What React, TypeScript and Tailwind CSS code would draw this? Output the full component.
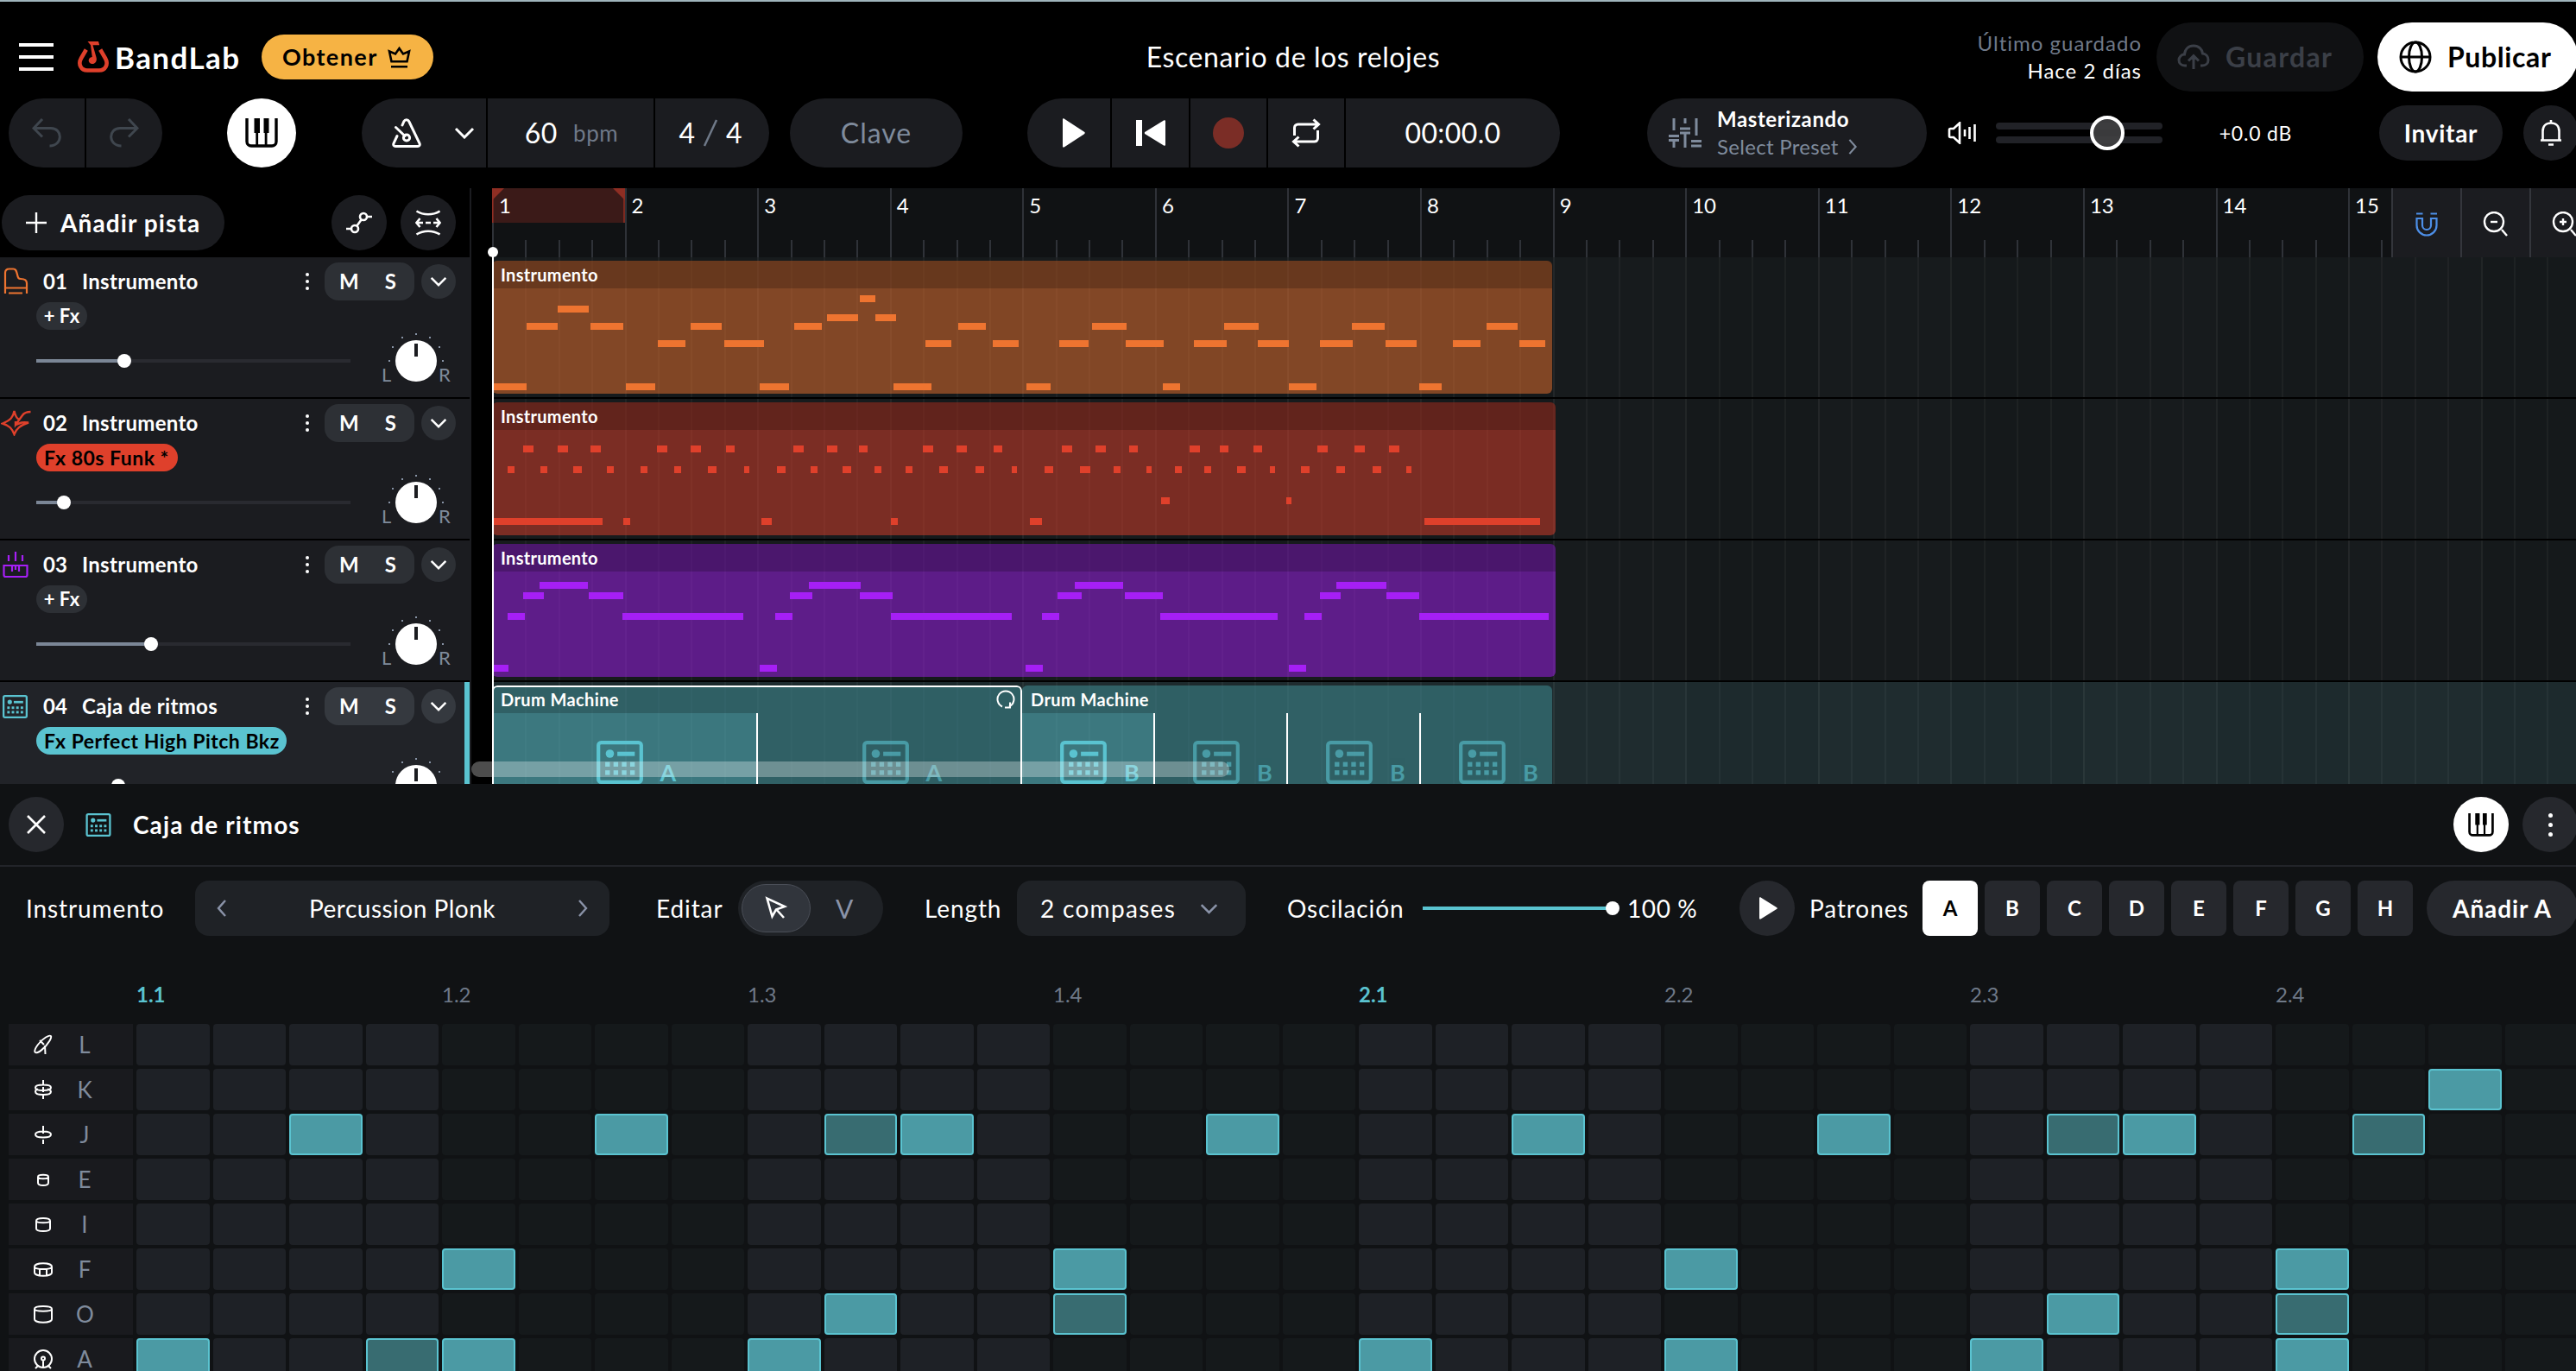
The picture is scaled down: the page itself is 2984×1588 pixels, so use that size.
import type { ReactNode } from 'react'

type Span = [number, number]

interface NoteRow {
  y: number
  spans: Span[]
}

interface Track {
  id: string
  name: string
  fx: string | null
  fxClass: string
  volume: number
  icon: ReactNode
  selected?: boolean
}

/* ---------- Icons ---------- */

const DrumMachineIcon = ({ className }: { className: string }) => (
  <svg viewBox="0 0 28 26" className={className} fill="currentColor">
    <rect x="1.1" y="1.1" width="25.8" height="23.8" rx="1.6" fill="none" stroke="currentColor" strokeWidth="2.2" />
    <circle cx="8" cy="7.800" r="2.5" />
    <rect x="12.5" y="6.600" width="10.5" height="2.6" />
    {[12.8, 17.8].map((y) =>
      [5.2, 10.2, 15.2, 20.2].map((x) => <rect key={`${x}-${y}`} x={x} y={y} width="2.8" height="2.8" />)
    )}
  </svg>
)

const PianoKeysIcon = ({ className }: { className: string }) => (
  <svg viewBox="0 0 38 34" className={className}>
    <path d="M2 0v27a5 5 0 0 0 5 5h24a5 5 0 0 0 5-5V0" fill="none" stroke="currentColor" strokeWidth="3.4" />
    <path d="M10.5 0h6.500v17h-6.500zM21.500 0h6v17h-6zM12.300 16h2.800v15h-2.800zM22.700 16h2.800v15h-2.800z" fill="currentColor" />
  </svg>
)

const ChevronDown = ({ className }: { className: string }) => (
  <svg viewBox="0 0 24 14" className={className} fill="none" stroke="currentColor" strokeWidth="3">
    <path d="M2 2l10 10L22 2" />
  </svg>
)

const ChevronRight = ({ className }: { className: string }) => (
  <svg viewBox="0 0 12 20" className={className} fill="none" stroke="currentColor" strokeWidth="2.400">
    <path d="M2 1l8 9-8 9" />
  </svg>
)

const Dots = ({ className }: { className: string }) => (
  <div className={`flex flex-col items-center ${className}`}>
    <span className="h-1 w-1 rounded-full bg-white" />
    <span className="h-1 w-1 rounded-full bg-white" />
    <span className="h-1 w-1 rounded-full bg-white" />
  </div>
)

const PianoIcon = () => (
  <svg viewBox="0 0 30 32" className="h-8 w-[30px] text-[#ee7430]" fill="none" stroke="currentColor" strokeWidth="2.2">
    <path d="M3 30V6c0-3 2-4.500 4.500-4.500h5C15.500 1.500 16 4 17 8c.8 4 1.500 5 4 5 5 0 7 1.500 7 5v12M3 23.500h25M7 29.500h16" />
  </svg>
)

const SparkIcon = () => (
  <svg viewBox="0 0 35 30" className="-ml-0.5 h-[30px] w-[35px] text-[#df402b]" fill="none" stroke="currentColor" strokeWidth="2.4">
    <path d="M34.500 2c-5 0-7.500 1-9.500 4l-8 11v-4M20.500 10.500C17.500 9 16.500 5.500 15.500 1 14.500 8 11 12 2 15.500c8 2.500 11 6 13.500 12.500C18 21.500 22 18 32 14.500c-4-.6-6-.6-8 0l-7 2.500" />
  </svg>
)

const SynthIcon = () => (
  <svg viewBox="0 0 30 32" className="h-8 w-[30px] text-[#a61ff5]" fill="none" stroke="currentColor" strokeWidth="2.2">
    <path d="M1.500 17v11a2 2 0 0 0 2 2h23a2 2 0 0 0 2-2V17zM7 5v7M15 1v11M23 5v7M11 17v7M15 17v5M19 17v7M7 17h16" />
  </svg>
)

/* ---------- Data ---------- */

const bars = Array.from({ length: 16 }, (_, i) => i + 1)

const tracks: Track[] = [
  { id: '01', name: 'Instrumento', fx: null, fxClass: '', volume: 102, icon: <PianoIcon /> },
  { id: '02', name: 'Instrumento', fx: '80s Funk *', fxClass: 'w-[164px] bg-[#df402b]', volume: 32, icon: <SparkIcon /> },
  { id: '03', name: 'Instrumento', fx: null, fxClass: '', volume: 133, icon: <SynthIcon /> },
  {
    id: '04',
    name: 'Caja de ritmos',
    fx: 'Perfect High Pitch Bkz',
    fxClass: 'w-[290px] bg-[#5ac3d0]',
    volume: 95,
    icon: <DrumMachineIcon className="h-[27px] w-[29px] text-[#5ac3d0]" />,
    selected: true,
  },
]

const pianoNotes: NoteRow[] = [
  { y: 40, spans: [[426, 444]] },
  { y: 52, spans: [[76, 112]] },
  { y: 62, spans: [[388, 424], [444, 468]] },
  { y: 72, spans: [[40, 76], [114, 152], [230, 266], [350, 382], [540, 572], [695, 735], [848, 888], [996, 1034], [1152, 1188]] },
  { y: 92, spans: [[192, 224], [269, 315], [502, 532], [580, 610], [657, 691], [734, 778], [813, 851], [887, 923], [959, 997], [1035, 1071], [1113, 1145], [1190, 1220]] },
  { y: 142, spans: [[2, 40], [155, 189], [310, 344], [465, 509], [619, 647], [777, 797], [923, 955], [1074, 1100]] },
]

const funkNotes: NoteRow[] = [
  { y: 50, spans: [[36, 48], [76, 88], [114, 126], [191, 203], [230, 242], [271, 281], [349, 361], [388, 400], [425, 435], [499, 511], [538, 550], [581, 591], [660, 672], [699, 711], [738, 748], [808, 820], [843, 853], [882, 892], [956, 968], [999, 1011], [1039, 1051]] },
  { y: 74, spans: [[18, 26], [56, 64], [94, 104], [133, 141], [172, 180], [211, 219], [250, 260], [292, 298], [330, 340], [369, 377], [406, 416], [443, 451], [479, 487], [518, 528], [560, 570], [602, 608], [640, 650], [681, 693], [720, 728], [758, 764], [791, 799], [825, 833], [863, 873], [901, 907], [937, 947], [978, 988], [1020, 1030], [1059, 1065]] },
  { y: 110, spans: [[775, 785], [920, 926]] },
  { y: 134, spans: [[2, 128], [152, 160], [312, 324], [462, 470], [623, 637], [1080, 1214]] },
]

const synthNotes: NoteRow[] = [
  { y: 44, spans: [[55, 111], [367, 427], [675, 731], [978, 1036]] },
  { y: 56, spans: [[36, 60], [112, 152], [345, 371], [426, 464], [655, 683], [733, 777], [959, 983], [1036, 1074]] },
  { y: 80, spans: [[18, 38], [151, 291], [328, 348], [462, 602], [637, 657], [774, 910], [941, 961], [1074, 1224]] },
  { y: 140, spans: [[2, 19], [310, 330], [618, 638], [923, 943]] },
]

const drumRows: { note: string; on: number[]; soft: number[]; icon: ReactNode }[] = [
  {
    note: 'L',
    on: [],
    soft: [],
    icon: <path d="M2.500 20.500C1 17 9 7 15 3.500c6-3.500 8-2 4.500 4C15 15 5 24 2.500 20.500zM8 7l5 5M14 13l.5 10" />,
  },
  {
    note: 'K',
    on: [30],
    soft: [],
    icon: <path d="M12 1v5M12 18v5M12 6.500c6 0 9 1.500 9 3.200s-3 3.300-9 3.300-9-1.500-9-3.300 3-3.200 9-3.200zM3 14.500c0 2 3 3.500 9 3.500s9-1.500 9-3.500-2-2.500-4-3M3 14.500c0-1.500 1-2.500 3-3M12 9v6" />,
  },
  {
    note: 'J',
    on: [2, 6, 10, 14, 18, 22, 26],
    soft: [9, 25, 29],
    icon: <path d="M12 2v9M12 18v5M12 8.500c6 0 9 1.500 9 3.500s-3 3.500-9 3.500-9-1.500-9-3.500 3-3.500 9-3.500z" />,
  },
  {
    note: 'E',
    on: [],
    soft: [],
    icon: <path d="M6 9c0-3 12-3 12 0v7c0 4-12 4-12 0zM6 9c0 3 12 3 12 0" />,
  },
  {
    note: 'I',
    on: [],
    soft: [],
    icon: <path d="M4 8c0-4 16-4 16 0v9c0 4-16 4-16 0zM4 8c0 3 16 3 16 0" />,
  },
  {
    note: 'F',
    on: [4, 12, 20, 28],
    soft: [],
    icon: <path d="M2 9c0-5 20-5 20 0v7c0 5-20 5-20 0zM2 9c0 4 20 4 20 0M8 12.500v7M16 12.500v7" />,
  },
  {
    note: 'O',
    on: [9, 25],
    soft: [12, 28],
    icon: <path d="M2 6c0-4 20-4 20 0v12c0 5-20 5-20 0zM2 6c0 3.500 20 3.500 20 0" />,
  },
  {
    note: 'A',
    on: [0, 4, 8, 16, 20, 24, 28],
    soft: [3],
    icon: (
      <>
        <circle cx="12" cy="12" r="10" />
        <path d="M12 9.500a2 2 0 1 1 0 4 2 2 0 0 1 0-4zM12 13v9M3 23l3-3M21 23l-3-3" />
      </>
    ),
  },
]

const beats = ['1.1', '1.2', '1.3', '1.4', '2.1', '2.2', '2.3', '2.4']
const patterns = ['A', 'B', 'C', 'D', 'E', 'F', 'G', 'H']

/* ---------- Header ---------- */

function TopBar() {
  return (
    <div className="flex h-20 items-center *:shrink-0">
      <div className="ml-[22px] flex h-8 w-10 flex-col justify-between">
        <span className="h-1 bg-white" />
        <span className="h-1 bg-white" />
        <span className="h-1 bg-white" />
      </div>
      <svg viewBox="0 0 36 36" className="ml-7 h-9 w-9">
        <path d="M9.800 9.500L4 19.500c-4 7 0 14 7 14h14c7 0 11-7 7-14L26.200 9.500" fill="none" stroke="#df402b" strokeWidth="4.600" />
        <path d="M11.500 0H24l1.200 4.200h-7.700l4 14c1.400 4.800-1.500 7.800-4.500 7.800-5.300 0-6-7.500-.2-8L15 4.200z" fill="#df402b" />
      </svg>
      <div className="ml-[7px] w-[146px] text-[35px] font-bold leading-none tracking-[1.4px]">BandLab</div>
      <button className="ml-6 flex h-[52px] w-[199px] items-center rounded-full bg-[#f6b344] pl-6 text-black">
        <span className="w-[122px] text-left text-[27px] font-bold tracking-[1.4px]">Obtener</span>
        <svg viewBox="0 0 27 26" className="h-[26px] w-[27px]" fill="none" stroke="currentColor" strokeWidth="2.600">
          <path d="M4.500 18.200L2 6.500l7 3L13.500 3 18 9.500l7-3-2.500 11.700zM4 24.200h19" />
        </svg>
      </button>
      <div className="ml-[796px] w-[400px] text-center text-[32px] tracking-[0.6px]">Escenario de los relojes</div>
      <div className="ml-[583px] w-[200px] text-right text-[24px] leading-8 tracking-[1px]">
        <div className="text-[#6f7988]">Último guardado</div>
        <div>Hace 2 días</div>
      </div>
      <div className="ml-[17px] flex h-20 w-60 items-center rounded-full bg-[#101113] pl-6 text-[#3b3f47]">
        <svg viewBox="0 0 38 30" className="mr-[18px] h-[30px] w-[38px]" fill="none" stroke="currentColor" strokeWidth="3">
          <path d="M11 25H9C4.500 25 2 22 2 18.500S5 12 8.500 12C9 6 13 2 19 2s10 4 10.500 9C33.500 11.500 36 14.500 36 18.500S33 25 29 25h-2M19 29V14M13 19.500l6-6 6 6" />
        </svg>
        <span className="text-[32px] font-bold tracking-[1.3px]">Guardar</span>
      </div>
      <div className="ml-4 flex h-20 w-[232px] items-center rounded-full bg-white pl-[25px] text-black">
        <svg viewBox="0 0 38 38" className="mr-[18px] h-[38px] w-[38px]" fill="none" stroke="currentColor" strokeWidth="3">
          <circle cx="19" cy="19" r="17" />
          <ellipse cx="19" cy="19" rx="7.500" ry="17" />
          <path d="M2 19h34" />
        </svg>
        <span className="text-[32px] font-bold tracking-[0.6px]">Publicar</span>
      </div>
    </div>
  )
}

function Toolbar() {
  const cell = 'flex h-20 items-center justify-center bg-[#1b1c20]'
  return (
    <div className="mt-2 flex h-20 items-center *:shrink-0">
      <div className="ml-2.5 flex gap-0.5 overflow-hidden rounded-full text-[#3f464e]">
        <div className={`${cell} w-[88px]`}>
          <svg viewBox="0 0 34 34" className="h-[34px] w-[34px]" fill="none" stroke="currentColor" strokeWidth="3">
            <path d="M12 1L2 11.500l10 10M2 11.500h20c14 0 14 20.500-1.500 20.500" />
          </svg>
        </div>
        <div className={`${cell} w-[88px]`}>
          <svg viewBox="0 0 34 34" className="h-[34px] w-[34px]" fill="none" stroke="currentColor" strokeWidth="3">
            <path d="M22 1l10 10.500-10 10M32 11.500H12c-14 0-14 20.500 1.500 20.500" />
          </svg>
        </div>
      </div>
      <div className="ml-[75px] flex h-20 w-20 items-center justify-center rounded-full bg-white text-black">
        <PianoKeysIcon className="h-[34px] w-[38px]" />
      </div>
      <div className="ml-[76px] flex gap-0.5 overflow-hidden rounded-full">
        <div className={`${cell} w-[144px] gap-[38px] pl-[22px]`}>
          <svg viewBox="0 0 34 34" className="h-[34px] w-[34px] shrink-0" fill="none" stroke="currentColor" strokeWidth="3" strokeLinecap="round">
            <path d="M12 8l2-4.500c1.200-2.300 4.500-2.300 5.700 0L32 29c.8 2-.2 3.500-2.200 3.500H4.200c-2 0-3-1.500-2.200-3.500l4-8.500M4.500 10.500L15 20.500" />
            <circle cx="17" cy="22.500" r="3.600" />
          </svg>
          <ChevronDown className="h-[14px] w-6 shrink-0" />
        </div>
        <div className={`${cell} w-[192px] gap-[18px] pl-0.5 text-[32px] tracking-[0.6px]`}>
          60 <span className="text-[26px] text-[#6f7988]">bpm</span>
        </div>
        <div className={`${cell} w-[132px] gap-[9px] pr-1 text-[32px]`}>
          4
          <svg viewBox="0 0 18 32" className="h-8 w-[18px]" stroke="#6f7988" strokeWidth="2.500">
            <path d="M2 31L16 1" />
          </svg>
          4
        </div>
      </div>
      <div className="ml-6 flex h-20 w-[200px] items-center justify-center rounded-full bg-[#1b1c20] text-[32px] tracking-[1px] text-[#7f8b9c]">
        Clave
      </div>
      <div className="ml-[75px] flex gap-0.5 overflow-hidden rounded-full">
        <div className={`${cell} w-[96px] pl-3`}>
          <svg viewBox="0 0 26 34" className="h-[34px] w-[26px]" fill="currentColor">
            <path d="M0 1.500C0 .3 1 0 2 .8l23 15c1 .7 1 1.700 0 2.400l-23 15c-1 .8-2 .5-2-.700z" />
          </svg>
        </div>
        <div className={`${cell} w-[89px]`}>
          <svg viewBox="0 0 34 30" className="h-[30px] w-[34px]" fill="currentColor">
            <path d="M0 0h7v30H0zM34 1.500v27c0 1.300-1 1.700-2 1L10.500 16.200c-.9-.6-.9-1.800 0-2.400L32 .5c1-.700 2-.300 2 1z" />
          </svg>
        </div>
        <div className={`${cell} w-[88px]`}>
          <span className="h-9 w-9 rounded-full bg-[#7b2d26]" />
        </div>
        <div className={`${cell} w-[88px]`}>
          <svg viewBox="0 0 34 34" className="h-[34px] w-[34px]" fill="none" stroke="currentColor" strokeWidth="3">
            <path d="M3.500 20v-9a4 4 0 0 1 4-4H31M25.500 1.500L31.500 7l-6 5.500M30.500 14v9a4 4 0 0 1-4 4H3M8.500 21.500L2.500 27l6 5.500" />
          </svg>
        </div>
        <div className={`${cell} w-[248px] text-[32px] tracking-[0.4px]`}>00:00.0</div>
      </div>
      <div className="ml-[101px] flex h-20 w-[324px] items-center rounded-full bg-[#1b1c20] pl-[25px]">
        <svg viewBox="0 0 38 34" className="h-[34px] w-[38px]" fill="none" stroke="#7f8b9c" strokeWidth="3">
          <path d="M6 0v14M0 20.500h12M0 25.500h12M6 26v8M19 0v6M13 12h12M13 17h12M19 18v16M32 0v20M26 26.500h12M26 32h12" />
        </svg>
        <div className="ml-[18px] text-[24px] leading-8">
          <div className="font-bold tracking-[0.6px]">Masterizando</div>
          <div className="flex items-center gap-2.5 tracking-[0.3px] text-[#7f8b9c]">
            Select Preset <ChevronRight className="h-[18px] w-3" />
          </div>
        </div>
      </div>
      <svg viewBox="0 0 34 26" className="ml-6 h-[26px] w-[34px]" fill="none" stroke="currentColor" strokeWidth="2.600">
        <path d="M2 9.500c0-1 .5-1.500 1.500-1.500H7l7-6.500v23L7 18H3.500C2.500 18 2 17.500 2 16.500zM20 9v8M25.500 6v14M31.500 3v20" />
      </svg>
      <div className="relative ml-[22px] flex w-[193px] flex-col gap-2">
        <span className="h-2 rounded-full bg-[#212227]" />
        <span className="h-2 rounded-full bg-[#212227]" />
        <span className="absolute -top-2 left-[109px] h-10 w-10 rounded-full border-4 border-white bg-[#404042]/90" />
      </div>
      <div className="ml-[58px] w-[100px] text-center text-[23px] tracking-[0.8px]">+0.0 dB</div>
      <div className="ml-[93px] flex h-16 w-[143px] items-center justify-center rounded-full bg-[#1b1c20] text-[28px] font-bold tracking-[0.7px]">
        Invitar
      </div>
      <div className="ml-6 flex h-16 w-16 items-center justify-center rounded-full bg-[#1b1c20]">
        <svg viewBox="0 0 26 30" className="h-[30px] w-[26px]" fill="none" stroke="currentColor" strokeWidth="2.600">
          <path d="M13 0v3M1 23.500h24M3.500 23V13c0-6 4-9.500 9.500-9.500s9.500 3.500 9.500 9.500v10M10 28.500h6" />
        </svg>
      </div>
    </div>
  )
}

/* ---------- Track list ---------- */

function Knob() {
  return (
    <svg viewBox="0 0 80 64" className="mt-0.5 h-16 w-20">
      {[[9, 34], [13, 18], [24, 7], [40, 3], [56, 7], [67, 18], [71, 34]].map(([x, y]) => (
        <rect key={x} x={x - 1} y={y - 1} width="2" height="2" fill="#8793a5" />
      ))}
      <circle cx="40" cy="34" r="24" fill="#fff" />
      <rect x="38" y="14" width="4" height="15" fill="#1b1c20" />
    </svg>
  )
}

function TrackHeader({ track }: { track: Track }) {
  const pill = track.selected ? 'bg-[#35393f]' : 'bg-[#2d3035]'
  return (
    <div
      className={`h-[162px] w-[544px] shrink-0 ${track.selected ? 'border-r-[6px] border-[#5ac3d0] bg-[#212328]' : 'bg-[#1b1c20]'}`}
    >
      <div className="flex h-[52px] items-center pt-1">
        <div className="flex w-[50px] shrink-0 justify-start pl-[3px]">{track.icon}</div>
        <span className="w-[45px] text-[24px] font-bold">{track.id}</span>
        <span className="w-[259px] text-[24px] font-bold tracking-[0.3px]">{track.name}</span>
        <Dots className="w-1 gap-1" />
        <div className={`ml-[18px] flex h-11 w-[104px] items-center justify-around rounded-2xl pl-0.5 pr-1.5 text-[24px] font-bold ${pill}`}>
          <span>M</span>
          <span>S</span>
        </div>
        <div className={`ml-2 flex h-10 w-10 items-center justify-center rounded-full ${pill}`}>
          <ChevronDown className="h-3 w-5" />
        </div>
      </div>
      {track.fx ? (
        <div className={`ml-[42px] flex h-8 items-center whitespace-nowrap rounded-full pl-[9px] text-[23px] font-bold tracking-[0.5px] text-black ${track.fxClass}`}>
          Fx {track.fx}
        </div>
      ) : (
        <div className={`ml-[42px] flex h-8 w-[59px] items-center justify-center rounded-full pb-0.5 text-[22px] font-bold ${pill}`}>
          + Fx
        </div>
      )}
      <div className="flex">
        <div className="relative ml-[42px] mt-[34px] h-1 w-[364px] bg-[#292a30]">
          <div className="h-1 bg-[#7b8696]" style={{ width: track.volume }} />
          <span className="absolute -top-1.5 h-4 w-4 rounded-full bg-white" style={{ left: track.volume - 8 }} />
        </div>
        <div className="ml-[36px] flex">
          <span className="mt-[38px] w-0 text-[22px] leading-7 text-[#7f8b9c]">L</span>
          <Knob />
          <span className="-ml-[14px] mt-[38px] text-[22px] leading-7 text-[#7f8b9c]">R</span>
        </div>
      </div>
    </div>
  )
}

/* ---------- Timeline ---------- */

function Ruler() {
  return (
    <div className="relative flex h-20 w-[2414px] overflow-hidden bg-[#101214]">
      {bars.map((bar) => (
        <div key={bar} className="relative flex h-20 w-[153.58px] shrink-0 items-end border-l-2 border-[#2f3238]">
          {bar === 1 && (
            <svg viewBox="0 0 154 40" className="absolute -left-0.5 top-0 h-10 w-[154px]">
              <rect width="154" height="40" fill="#3b1a18" />
              <path d="M0 0h14L0 14v26M154 0h-14l14 14v26" fill="#8e2e23" />
              <path d="M.8 0v40M153 0v40" stroke="#8e2e23" strokeWidth="1.600" />
            </svg>
          )}
          <span className="absolute left-[6px] top-0.5 text-[24px]">{bar}</span>
          <span className="h-5 w-[38.4px] border-r-2 border-[#2f3238]" />
          <span className="h-5 w-[38.4px] border-r-2 border-[#2f3238]" />
          <span className="h-5 w-[38.4px] border-r-2 border-[#2f3238]" />
        </div>
      ))}
      <div className="absolute right-0 top-0 flex h-20 w-[214px] bg-[#1b1c20]">
        <div className="flex w-20 shrink-0 items-center justify-center border-l-2 border-[#34363c] pt-1 text-[#4d8fe8]">
          <svg viewBox="0 0 26 28" className="h-7 w-[26px]" fill="none" stroke="currentColor" strokeWidth="2.200">
            <path d="M1.500 7v8a11.500 11.500 0 0 0 23 0V7h-6.500v8a5 5 0 0 1-10 0V7zM1 1.500h7.500M17.500 1.500H25" />
          </svg>
        </div>
        {['M9 12h8', 'M9 12h8M13 8v8'].map((d) => (
          <div key={d} className="flex w-20 shrink-0 items-center justify-center border-l-2 border-[#34363c] pt-1">
            <svg viewBox="0 0 30 30" className="h-[30px] w-[30px]" fill="none" stroke="currentColor" strokeWidth="2.400">
              <circle cx="13" cy="12" r="11" />
              <path d={d} />
              <path d="M22 21l6 7" />
            </svg>
          </div>
        ))}
      </div>
    </div>
  )
}

function GridLines() {
  return (
    <div className="absolute inset-0 flex overflow-hidden">
      {bars.map((bar) => (
        <div key={bar} className={`flex w-[153.58px] shrink-0 ${bar % 2 ? 'bg-white/[0.012]' : ''}`}>
          <span className="flex-1 border-l-2 border-white/[0.05]" />
          <span className="flex-1 border-l-2 border-white/[0.04]" />
          <span className="flex-1 border-l-2 border-white/[0.04]" />
          <span className="flex-1 border-l-2 border-white/[0.04]" />
        </div>
      ))}
    </div>
  )
}

function MidiClip({ rows, className, noteClass }: { rows: NoteRow[]; className: string; noteClass: string }) {
  return (
    <div className={`relative h-[154px] overflow-hidden rounded-md ${className}`}>
      <div className="h-8 bg-black/20 pl-2.5 text-[20px] font-bold leading-8 tracking-[0.3px]">Instrumento</div>
      <svg className="absolute left-0 top-0 h-full w-full">
        {rows.map((row) =>
          row.spans.map(([start, end]) => (
            <rect key={start} x={start} y={row.y} width={end - start} height="8" className={noteClass} />
          ))
        )}
      </svg>
    </div>
  )
}

function DrumClip({ letter, segments, widthClass, selected }: { letter: string; segments: number; widthClass: string; selected?: boolean }) {
  return (
    <div className={`relative h-[154px] overflow-hidden rounded-md bg-[#5ac3d0]/50 ${widthClass}`}>
      <div className="flex h-8 items-center justify-between bg-black/20 pl-2.5 pr-2 text-[20px] font-bold tracking-[0.4px]">
        Drum Machine
        {selected && (
          <svg viewBox="0 0 22 22" className="h-[22px] w-[22px]" fill="none" stroke="currentColor" strokeWidth="2">
            <path d="M7 19.500a9.500 9.500 0 1 1 8 0M16 14.500v6h-6" />
          </svg>
        )}
      </div>
      <div className="flex h-[122px]">
        {Array.from({ length: segments }, (_, i) => (
          <div
            key={i}
            className={`flex flex-1 justify-center gap-5 pl-7 pt-8 text-[#5ac3d0] ${i ? 'border-l-2 border-l-white bg-black/20' : ''}`}
          >
            <DrumMachineIcon className={`h-[50px] w-[54px] ${i ? 'opacity-60' : ''}`} />
            <span className={`pt-[17px] text-[27px] font-bold leading-10 ${i ? 'opacity-60' : ''}`}>{letter}</span>
          </div>
        ))}
      </div>
      {selected && <div className="absolute inset-0 rounded-md border-2 border-white" />}
    </div>
  )
}

function Lane({ children, selected }: { children: ReactNode; selected?: boolean }) {
  return (
    <div className={`relative mb-0.5 h-[162px] w-[2414px] pt-1 ${selected ? 'bg-[#1d2a2d]' : 'bg-[#15191b]'}`}>
      <GridLines />
      <div className="relative flex">{children}</div>
    </div>
  )
}

function Arrangement() {
  return (
    <div className="relative mt-6 flex h-[690px] overflow-hidden">
      <div className="w-[546px] shrink-0 border-r-2 border-[#1b1c20]">
        <div className="flex h-20 items-center">
          <button className="ml-0.5 flex h-16 w-[258px] items-center rounded-full bg-[#1b1c20] pl-7 text-[28px] font-bold tracking-[1.1px]">
            <svg viewBox="0 0 24 24" className="mr-4 h-6 w-6" stroke="currentColor" strokeWidth="2.400">
              <path d="M12 0v24M0 12h24" />
            </svg>
            Añadir pista
          </button>
          <div className="ml-[124px] flex h-16 w-16 items-center justify-center rounded-full bg-[#1b1c20]">
            <svg viewBox="0 0 30 26" className="h-[26px] w-[30px]" fill="none" stroke="currentColor" strokeWidth="2.600">
              <circle cx="10" cy="20" r="4" />
              <circle cx="20" cy="6" r="4" />
              <path d="M0 20h6M12.500 16.500L17.500 9.500M24 6h6" />
            </svg>
          </div>
          <div className="ml-4 flex h-16 w-16 items-center justify-center rounded-full bg-[#1b1c20]">
            <svg viewBox="0 0 30 30" className="h-[30px] w-[30px]" fill="none" stroke="currentColor" strokeWidth="2.600">
              <path d="M1.500 1.500c8 5 19 5 27 0M1.500 28.500c8-5 19-5 27 0M5.500 10L1.500 15l4 5M24.500 10l4 5-4 5M2 15h7M12 15h6M21 15h7" />
            </svg>
          </div>
        </div>
        <div className="flex flex-col gap-0.5">
          {tracks.map((track) => (
            <TrackHeader key={track.id} track={track} />
          ))}
        </div>
      </div>
      <div className="ml-6">
        <Ruler />
        <Lane>
          <MidiClip rows={pianoNotes} className="w-[1228px] bg-[#ee7430]/50" noteClass="fill-[#ee7430]" />
        </Lane>
        <Lane>
          <MidiClip rows={funkNotes} className="w-[1232px] bg-[#df402b]/50" noteClass="fill-[#df402b]" />
        </Lane>
        <Lane>
          <MidiClip rows={synthNotes} className="w-[1232px] bg-[#a61ff5]/50" noteClass="fill-[#a61ff5]" />
        </Lane>
        <Lane selected>
          <DrumClip letter="A" segments={2} widthClass="w-[614px]" selected />
          <DrumClip letter="B" segments={4} widthClass="w-[614px]" />
        </Lane>
      </div>
      {/* Playhead and horizontal scrollbar float over the lanes */}
      <div className="absolute left-[570px] top-[74px] h-full w-0.5 bg-white" />
      <div className="absolute left-[565px] top-[68px] h-3 w-3 rounded-full bg-white" />
      <div className="absolute left-[546px] top-[664px] h-[18px] w-[878px] rounded-full bg-white/30" />
    </div>
  )
}

/* ---------- Drum machine panel ---------- */

function PanelControls() {
  return (
    <div className="mt-4 flex h-16 items-center text-[28px] tracking-[0.9px] *:shrink-0">
      <span className="ml-[30px] w-[196px]">Instrumento</span>
      <div className="flex h-16 w-[480px] items-center justify-between rounded-2xl bg-[#1f2226] px-[25px]">
        <ChevronRight className="h-5 w-3 rotate-180 text-[#8a93a8]" />
        <span className="tracking-[0.5px]">Percussion Plonk</span>
        <ChevronRight className="h-5 w-3 text-[#8a93a8]" />
      </div>
      <span className="ml-[54px] w-[95px]">Editar</span>
      <div className="flex h-16 w-[168px] items-center rounded-full bg-[#1f2226] pl-1">
        <div className="flex h-14 w-20 items-center justify-center rounded-full border border-[#4a4e57] bg-[#31353c]">
          <svg viewBox="0 0 26 28" className="h-7 w-[26px]" fill="none" stroke="currentColor" strokeWidth="2.600">
            <path d="M2.500 2.500l6 21 4.500-8 10-3.500zM13 15l9 10" />
          </svg>
        </div>
        <span className="ml-[29px] text-[30px] text-[#8a93a8]">V</span>
      </div>
      <span className="ml-[48px] w-[107px]">Length</span>
      <div className="flex h-16 w-[265px] items-center justify-between rounded-2xl bg-[#1f2226] pl-[27px] pr-8 tracking-[1.3px]">
        2 compases <ChevronDown className="h-[13px] w-[21px] text-[#8a93a8]" />
      </div>
      <span className="ml-[48px] w-[157px]">Oscilación</span>
      <div className="relative h-1 w-[220px] bg-[#5ac3d0]">
        <span className="absolute -right-2 -top-1.5 h-4 w-4 rounded-full bg-white" />
      </div>
      <span className="ml-[17px] w-[130px] tracking-[0.6px]">100 %</span>
      <div className="flex h-16 w-16 items-center justify-center rounded-full bg-[#26282d] pl-0.5">
        <svg viewBox="0 0 21 26" className="h-[26px] w-[21px]" fill="currentColor">
          <path d="M0 1.500C0 .3 1 0 2 .7l18 11.200c1 .6 1 1.600 0 2.200L2 25.300c-1 .7-2 .4-2-.8z" />
        </svg>
      </div>
      <span className="ml-[17px] w-[131px]">Patrones</span>
      <div className="flex gap-2 text-[24px] font-bold tracking-normal">
        {patterns.map((p) => (
          <div
            key={p}
            className={`flex h-16 w-16 items-center justify-center rounded-lg ${p === 'A' ? 'bg-white text-black' : 'bg-[#26282d]'}`}
          >
            {p}
          </div>
        ))}
      </div>
      <div className="ml-4 flex h-16 w-[175px] items-center justify-center rounded-full bg-[#26282d] font-bold">
        Añadir A
      </div>
    </div>
  )
}

function cellClass(step: number, on: number[], soft: number[]) {
  if (on.includes(step)) return 'border-2 border-[#5ac3d0] bg-[#4b9aa4]'
  if (soft.includes(step)) return 'border-2 border-[#5ac3d0] bg-[#386c71]'
  return Math.floor(step / 4) % 2 === 0 ? 'bg-[#1e2126]' : 'bg-[#15191b]'
}

function StepGrid() {
  return (
    <div className="mt-10">
      <div className="ml-[158px] flex h-[62px] items-center pb-1.5">
        {beats.map((beat) => (
          <span
            key={beat}
            className={`w-[354px] shrink-0 text-[24px] ${beat.endsWith('.1') ? 'font-bold text-[#5ac3d0]' : 'text-[#6f7988]'}`}
          >
            {beat}
          </span>
        ))}
      </div>
      <div className="flex flex-col gap-1">
        {drumRows.map((row) => (
          <div key={row.note} className="ml-2.5 flex h-12 gap-1">
            <div className="flex w-36 shrink-0 items-center bg-[#191a1e] pl-7">
              <svg viewBox="0 0 24 24" className="h-6 w-6" fill="none" stroke="#fff" strokeWidth="2">
                {row.icon}
              </svg>
              <span className="ml-[26px] w-5 text-center text-[26px] text-[#7f8b9c]">{row.note}</span>
            </div>
            {Array.from({ length: 32 }, (_, step) => (
              <span key={step} className={`h-12 w-[84.5px] shrink-0 rounded-[4px] ${cellClass(step, row.on, row.soft)}`} />
            ))}
          </div>
        ))}
      </div>
    </div>
  )
}

function DrumPanel() {
  return (
    <div className="h-[680px] overflow-hidden bg-[#101214]">
      <div className="flex h-24 items-center border-b-2 border-[#222429]">
        <div className="ml-2.5 flex h-16 w-16 items-center justify-center rounded-full bg-[#26282d]">
          <svg viewBox="0 0 22 22" className="h-[22px] w-[22px]" stroke="currentColor" strokeWidth="2.600">
            <path d="M1 1l20 20M21 1L1 21" />
          </svg>
        </div>
        <DrumMachineIcon className="ml-[25px] h-[27px] w-[30px] text-[#5ac3d0]" />
        <span className="ml-[25px] text-[28px] font-bold tracking-[1.1px]">Caja de ritmos</span>
        <div className="ml-auto mr-4 flex h-16 w-16 items-center justify-center rounded-full bg-white text-black">
          <PianoKeysIcon className="h-[27px] w-[30px]" />
        </div>
        <div className="-mr-0.5 flex h-16 w-16 shrink-0 items-center justify-center rounded-full bg-[#26282d] *:*:h-[5px] *:*:w-[5px]">
          <Dots className="gap-[6px]" />
        </div>
      </div>
      <PanelControls />
      <StepGrid />
    </div>
  )
}

export default function App() {
  return (
    <div className="h-[1588px] w-[2984px] overflow-hidden whitespace-nowrap bg-black font-['Lato','Open_Sans',sans-serif] text-white">
      <div className="h-0.5 bg-[#9fb4bb]" />
      <div className="pt-6">
        <TopBar />
      </div>
      <Toolbar />
      <Arrangement />
      <DrumPanel />
    </div>
  )
}
